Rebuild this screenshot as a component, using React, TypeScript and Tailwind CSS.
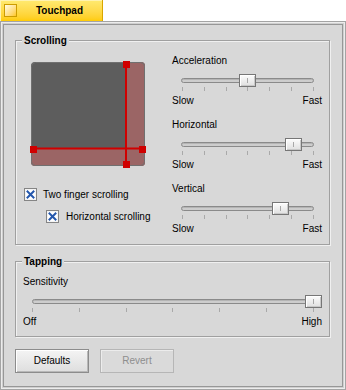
import React from 'react';

function Ticks({ className }: { className: string }) {
  return (
    <div className={`mt-[4px] flex h-[4px] justify-between ${className}`}>
      {[0, 1, 2, 3, 4, 5, 6].map((i) => (
        <div key={i} className="h-[4px] w-px bg-[#a9a9a9]" />
      ))}
    </div>
  );
}

interface SliderProps {
  label: string;
  min: string;
  max: string;
  trackClass: string;
  tickClass: string;
  thumbClass: string;
}

function Slider({ label, min, max, trackClass, tickClass, thumbClass }: SliderProps) {
  return (
    <div>
      <div className="h-[12px]">{label}</div>
      <div className="relative h-[28px] pt-[11px]">
        <div
          className={`ml-[9px] h-[5px] rounded-full border border-[#8a8a8a] bg-[#cdcdcd] shadow-[inset_0_1px_0_#b4b4b4] ${trackClass}`}
        />
        <Ticks className={tickClass} />
        {/* Thumb */}
        <div
          className={`absolute top-[7px] flex h-[13px] w-[17px] justify-center border border-[#767676] bg-gradient-to-b from-[#fcfcfc] to-[#e0e0e0] pt-[3px] shadow-[inset_1px_1px_0_#ffffff,inset_-1px_-1px_0_#c8c8c8] ${thumbClass}`}
        >
          <div className="h-[5px] w-px bg-[#a8a8a8]" />
        </div>
      </div>
      <div className="flex h-[12px] justify-between">
        <span>{min}</span>
        <span>{max}</span>
      </div>
    </div>
  );
}

function CheckBox() {
  return (
    <svg width="13" height="13" viewBox="0 0 13 13" className="shrink-0">
      <rect x="0.5" y="0.5" width="12" height="12" fill="#ffffff" stroke="#858585" />
      <rect x="1.5" y="1.5" width="10" height="10" fill="none" stroke="#f4f4f4" />
      <path d="M3.5 3.5 L9.5 9.5 M9.5 3.5 L3.5 9.5" stroke="#2457ac" strokeWidth="2" strokeLinecap="square" />
    </svg>
  );
}

function TouchpadArea() {
  return (
    <svg width="118" height="110" viewBox="0 0 118 110" className="ml-[5px] mt-[5px] block">
      <defs>
        <clipPath id="pad">
          <rect x="2" y="2" width="114" height="104" rx="4" />
        </clipPath>
      </defs>
      <g clipPath="url(#pad)">
        <rect x="2" y="2" width="114" height="104" fill="#5d5d5d" />
        <rect x="97" y="2" width="19" height="104" fill="#9b6565" />
        <rect x="2" y="89" width="114" height="17" fill="#9b6565" />
      </g>
      <rect x="2.5" y="2.5" width="113" height="103" rx="4" fill="none" stroke="#707070" />
      <rect x="96" y="2" width="2" height="104" fill="#d00000" />
      <rect x="2" y="87.5" width="114" height="2" fill="#d00000" />
      <rect x="94" y="1" width="7" height="7" fill="#d00000" />
      <rect x="94" y="101" width="7" height="7" fill="#d00000" />
      <rect x="1" y="86" width="7" height="7" fill="#d00000" />
      <rect x="110" y="86" width="7" height="7" fill="#d00000" />
    </svg>
  );
}

export default function App() {
  return (
    <div className="h-[390px] w-[346px] overflow-hidden bg-white font-['Liberation_Sans',Arial,sans-serif] text-[10px] leading-[12px] text-black">
      {/* Window tab */}
      <div className="flex h-[21px] w-[103px] items-center border-r border-[#d9a600] bg-gradient-to-b from-[#ffea70] to-[#ffcc00] shadow-[inset_1px_1px_0_#fff3b0]">
        <div className="ml-[4px] h-[13px] w-[13px] border border-[#cc9c00] bg-gradient-to-br from-[#fffbe2] to-[#ffc800]" />
        <div className="flex flex-1 justify-center font-bold">Touchpad</div>
      </div>

      {/* Window frame */}
      <div className="h-[369px] border border-[#a4a4a4]">
        <div className="h-full border border-[#ececec]">
          <div className="h-full border border-[#cfcfcf] bg-[#d8d8d8]">
            <div className="h-full border border-[#979797] bg-[#d8d8d8] px-[11px] pt-[15px]">
              {/* Scrolling box */}
              <div className="relative flex h-[205px] w-[315px] border border-[#a0a0a0] pl-[8px] pr-[7px] pt-[14px] shadow-[inset_1px_1px_0_#f0f0f0,1px_1px_0_#f0f0f0]">
                <div className="absolute left-[6px] top-[-6px] bg-[#d8d8d8] px-[2px] font-bold">Scrolling</div>
                <div className="w-[148px]">
                  <TouchpadArea />
                  <div className="mt-[18px] flex h-[13px] items-center gap-[6px]">
                    <CheckBox />
                    <span>Two finger scrolling</span>
                  </div>
                  <div className="ml-[22px] mt-[9px] flex h-[13px] items-center gap-[7px]">
                    <CheckBox />
                    <span>Horizontal scrolling</span>
                  </div>
                </div>
                <div className="flex w-[150px] flex-col gap-[12px]">
                  <Slider
                    label="Acceleration"
                    min="Slow"
                    max="Fast"
                    trackClass="w-[133px]"
                    tickClass="ml-[10px] w-[132px]"
                    thumbClass="left-[67px]"
                  />
                  <Slider
                    label="Horizontal"
                    min="Slow"
                    max="Fast"
                    trackClass="w-[133px]"
                    tickClass="ml-[10px] w-[132px]"
                    thumbClass="left-[113px]"
                  />
                  <Slider
                    label="Vertical"
                    min="Slow"
                    max="Fast"
                    trackClass="w-[133px]"
                    tickClass="ml-[10px] w-[132px]"
                    thumbClass="left-[100px]"
                  />
                </div>
              </div>

              {/* Tapping box */}
              <div className="relative mt-[16px] h-[76px] w-[315px] border border-[#a0a0a0] pl-[7px] pr-[7px] pt-[14px] shadow-[inset_1px_1px_0_#f0f0f0,1px_1px_0_#f0f0f0]">
                <div className="absolute left-[6px] top-[-6px] bg-[#d8d8d8] px-[2px] font-bold">Tapping</div>
                <Slider
                  label="Sensitivity"
                  min="Off"
                  max="High"
                  trackClass="w-[290px]"
                  tickClass="ml-[9px] w-[282px]"
                  thumbClass="left-[282px]"
                />
              </div>

              {/* Buttons */}
              <div className="mt-[12px] flex gap-[11px]">
                <button className="flex h-[24px] w-[74px] items-center justify-center border border-[#8c8c8c] bg-gradient-to-b from-[#f4f4f4] to-[#dedede] shadow-[inset_1px_1px_0_#ffffff,inset_-1px_-1px_0_#b8b8b8]">
                  Defaults
                </button>
                <button className="flex h-[24px] w-[74px] items-center justify-center border border-[#b6b6b6] bg-[#dadada] text-[#8e8e8e] shadow-[inset_1px_1px_0_#ececec]">
                  Revert
                </button>
              </div>
            </div>
          </div>
        </div>
      </div>
    </div>
  );
}
